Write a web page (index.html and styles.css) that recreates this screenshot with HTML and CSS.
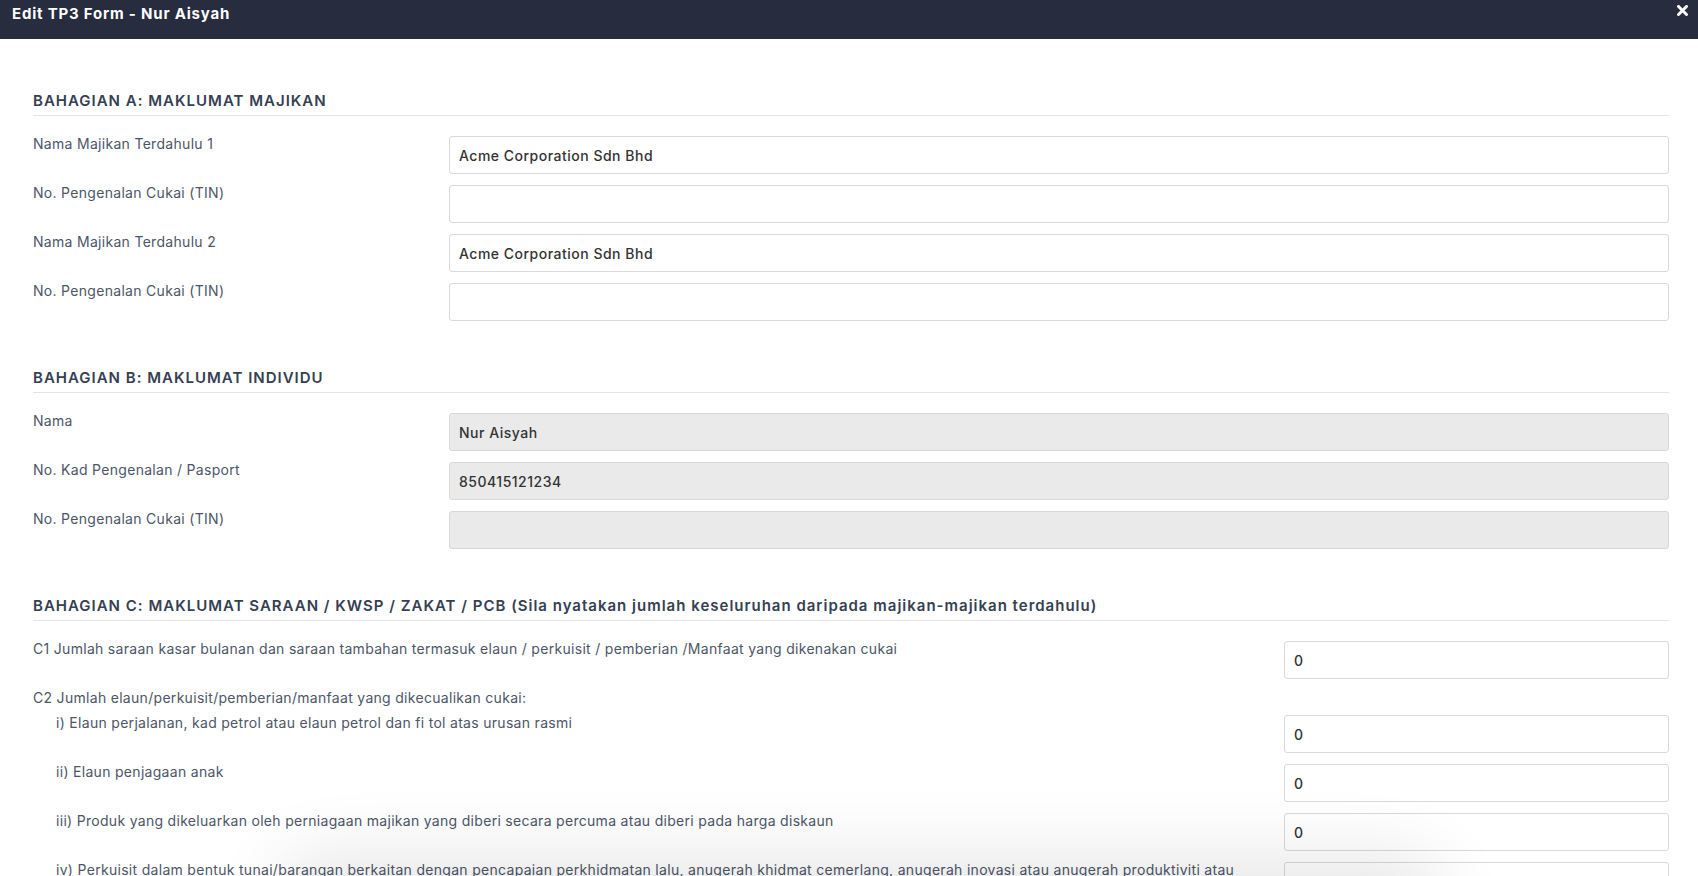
FILE: index.html
```html
<!DOCTYPE html>
<html lang="ms">
<head>
  <meta charset="UTF-8">
  <title>Edit TP3 Form - Nur Aisyah</title>
  <meta name="viewport" content="width=device-width, initial-scale=1.0">
  <link rel="stylesheet" href="styles.css">
</head>
<body>

  <!-- Header -->
  <div class="modal-header">
    <h3>Edit TP3 Form - Nur Aisyah</h3>
    <button class="close" aria-label="Tutup">
      <svg width="11" height="11" viewBox="0 0 11 11"><path d="M1.5 1.5 L9.5 9.5 M9.5 1.5 L1.5 9.5" stroke="#fff" stroke-width="3" stroke-linecap="square"/></svg>
    </button>
  </div>

  <div class="modal-body">

    <!-- Bahagian A -->
    <div class="form-section">
      <h4 class="section-title">BAHAGIAN A: MAKLUMAT MAJIKAN</h4>
      <div class="form-row">
        <label>Nama Majikan Terdahulu 1</label>
        <input type="text" value="Acme Corporation Sdn Bhd">
      </div>
      <div class="form-row">
        <label>No. Pengenalan Cukai (TIN)</label>
        <input type="text" value="">
      </div>
      <div class="form-row">
        <label>Nama Majikan Terdahulu 2</label>
        <input type="text" value="Acme Corporation Sdn Bhd">
      </div>
      <div class="form-row">
        <label>No. Pengenalan Cukai (TIN)</label>
        <input type="text" value="">
      </div>
    </div>

    <!-- Bahagian B -->
    <div class="form-section">
      <h4 class="section-title">BAHAGIAN B: MAKLUMAT INDIVIDU</h4>
      <div class="form-row">
        <label>Nama</label>
        <input type="text" value="Nur Aisyah" disabled>
      </div>
      <div class="form-row">
        <label>No. Kad Pengenalan / Pasport</label>
        <input type="text" value="850415121234" disabled>
      </div>
      <div class="form-row">
        <label>No. Pengenalan Cukai (TIN)</label>
        <input type="text" value="" disabled>
      </div>
    </div>

    <!-- Bahagian C -->
    <div class="form-section">
      <h4 class="section-title">BAHAGIAN C: MAKLUMAT SARAAN / KWSP / ZAKAT / PCB (Sila nyatakan jumlah keseluruhan daripada majikan-majikan terdahulu)</h4>
      <div class="form-row amount">
        <label>C1 Jumlah saraan kasar bulanan dan saraan tambahan termasuk elaun / perkuisit / pemberian /Manfaat yang dikenakan cukai</label>
        <input type="text" value="0">
      </div>
      <div class="group-label">C2 Jumlah elaun/perkuisit/pemberian/manfaat yang dikecualikan cukai:</div>
      <div class="form-row amount sub">
        <label>i) Elaun perjalanan, kad petrol atau elaun petrol dan fi tol atas urusan rasmi</label>
        <input type="text" value="0">
      </div>
      <div class="form-row amount sub">
        <label>ii) Elaun penjagaan anak</label>
        <input type="text" value="0">
      </div>
      <div class="form-row amount sub">
        <label>iii) Produk yang dikeluarkan oleh perniagaan majikan yang diberi secara percuma atau diberi pada harga diskaun</label>
        <input type="text" value="0">
      </div>
      <div class="form-row amount sub">
        <label>iv) Perkuisit dalam bentuk tunai/barangan berkaitan dengan pencapaian perkhidmatan lalu, anugerah khidmat cemerlang, anugerah inovasi atau anugerah produktiviti atau anugerah perkhidmatan panjang</label>
        <input type="text" value="0">
      </div>
    </div>

  </div>

  <div class="footer-shadow"></div>

</body>
</html>
```

FILE: styles.css
```css
* { margin: 0; padding: 0; box-sizing: border-box; }
body {
  font-family: Inter, 'Open Sans', sans-serif;
  background: #fff;
  overflow: hidden;
  height: 100vh;
}

.modal-header {
  background: #272c3f;
  height: 39px;
  display: flex;
  justify-content: space-between;
  align-items: flex-start;
  padding: 4px 10px 0 12px;
}
.modal-header h3 {
  color: #fff;
  font-size: 15px;
  font-weight: 700;
  line-height: 20px;
  letter-spacing: 0.8px;
}
.close {
  background: none;
  border: none;
  margin-top: 1px;
  cursor: pointer;
  display: flex;
}

.modal-body { padding: 52px 29px 0 33px; }

.form-section { margin-bottom: 47px; }
.section-title {
  color: #354053;
  font-size: 15px;
  font-weight: 600;
  line-height: 20px;
  letter-spacing: 1px;
  padding-bottom: 4px;
  border-bottom: 1px solid #e3e3e3;
  margin-bottom: 20px;
}

.form-row {
  display: grid;
  grid-template-columns: 416px 1fr;
  margin-bottom: 11px;
}
.form-row label,
.group-label {
  color: #4d5668;
  font-size: 14px;
  line-height: 16px;
  letter-spacing: 0.3px;
}
.form-row input {
  height: 38px;
  border: 1px solid #d9d9d9;
  border-radius: 3px;
  padding: 0 9px;
  font-family: inherit;
  font-size: 14px;
  font-weight: 500;
  letter-spacing: 0.5px;
  color: #333;
  background: #fff;
}
.form-row input:disabled {
  background: #eaeaea;
  border-color: #d8d8d8;
  color: #333;
}

.form-row.amount { grid-template-columns: 1fr 385px; column-gap: 20px; }
.form-row.sub { padding-left: 23px; }
.group-label { margin-bottom: 9px; }

.footer-shadow {
  position: fixed;
  left: 300px;
  width: 1120px;
  bottom: -50px;
  height: 50px;
  background: #fff;
  border-radius: 40px;
  box-shadow: 0 0 70px 25px rgba(0, 0, 0, 0.09);
  pointer-events: none;
}
```
